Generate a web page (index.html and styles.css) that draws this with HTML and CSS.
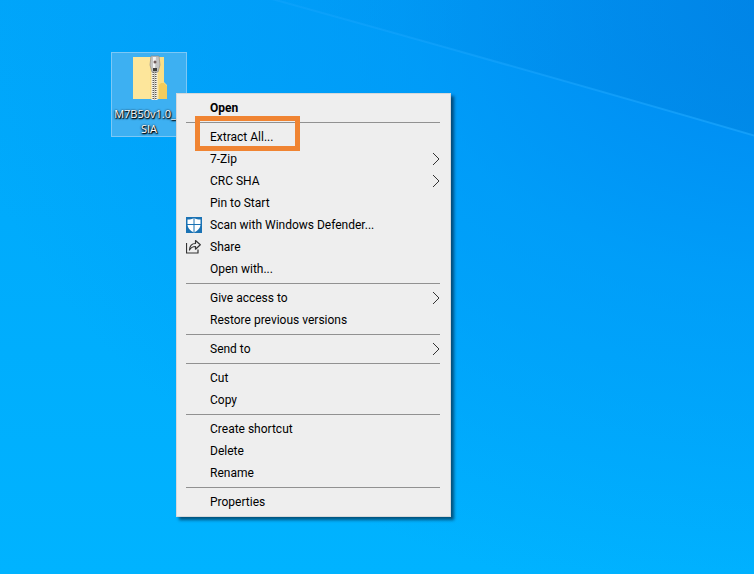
FILE: index.html
```html
<!DOCTYPE html>
<html lang="en">
<head>
<meta charset="utf-8">
<title>Desktop</title>
<link rel="stylesheet" href="styles.css">
</head>
<body>
<main class="desktop">
  <svg class="beam" viewBox="0 0 754 574" preserveAspectRatio="none" aria-hidden="true">
    <defs>
      <linearGradient id="glow" x1="0" y1="0" x2="1" y2="0">
        <stop offset="0" stop-color="#1ea8ff" stop-opacity=".3"/>
        <stop offset="1" stop-color="#1ea8ff" stop-opacity=".65"/>
      </linearGradient>
      <linearGradient id="shade" x1="0" y1="0" x2="1" y2="0">
        <stop offset="0" stop-color="#0080d8" stop-opacity="0"/>
        <stop offset="1" stop-color="#0080d8" stop-opacity=".4"/>
      </linearGradient>
    </defs>
    <path d="M272 -1 Q500 62 756 136 V-1Z" fill="url(#shade)"/>
    <path d="M272 -1 Q500 62 756 136" fill="none" stroke="url(#glow)" stroke-width="2"/>
  </svg>

  <button class="file" type="button">
    <svg class="file-icon" viewBox="0 0 36 46" aria-hidden="true">
      <path d="M2 2h31v25l3 3v14H2z" fill="#fbdf86"/>
      <path d="M2 2h17v42H2z" fill="#fde69b"/>
      <path d="M28 44V30l2-2h3l3 3v13z" fill="#f3cc5c"/>
      <path d="M23.500 14v31" stroke="#f4f1e6" stroke-width="6"/>
      <path d="M23.500 15v30" stroke="#615d55" stroke-width="4" stroke-dasharray="1 1"/>
      <path d="M23.500 15v30" stroke="#c9c6bd" stroke-width="1"/>
      <path d="M20 1h8l1 9-2 7h-6l-2-7z" fill="#c4c4c4" stroke="#858585" stroke-width=".6"/>
      <path d="M22 2h3l-1 11h-2z" fill="#f2f2f2"/>
      <circle cx="24" cy="7" r="1.500" fill="#715d5d"/>
      <path d="M22 13h4v3h-4z" fill="#3d3d3d"/>
    </svg>
    <span class="file-name"><span class="file-stem">M7B50v1.0_</span><br>SIA</span>
  </button>

  <div class="menu" role="menu">
    <button class="item default" role="menuitem">Open</button>
    <hr>
    <button class="item marked" role="menuitem">Extract All...</button>
    <button class="item" role="menuitem">7-Zip<svg class="arrow" viewBox="0 0 8 14" aria-hidden="true"><path d="M1 1l6 6-6 6"/></svg></button>
    <button class="item" role="menuitem">CRC SHA<svg class="arrow" viewBox="0 0 8 14" aria-hidden="true"><path d="M1 1l6 6-6 6"/></svg></button>
    <button class="item" role="menuitem">Pin to Start</button>
    <button class="item" role="menuitem"><svg class="icon" viewBox="0 0 16 16" aria-hidden="true"><path d="M0 0h16v16H0z" fill="#1a72b4"/><path d="M8 1c2 1.300 4 1.500 6.500 1.500V7c0 4-2.500 6.500-6.500 8.500C4 13.500 1.500 11 1.500 7V2.500C4 2.500 6 2.300 8 1z" fill="#fff"/><path d="M8 1v14M1 7.500h14" stroke="#1a72b4"/></svg>Scan with Windows Defender...</button>
    <button class="item" role="menuitem"><svg class="icon" viewBox="0 0 16 16" aria-hidden="true"><path d="M.500 4v10h11.500v-3.500M3.500 11c.3-4.500 2.500-6.500 6-6.500V1.500l4.800 4.300-4.800 4.400V7.500c-2.700 0-4.500.8-6 3.500z" fill="none" stroke="#333" stroke-width="1.200" stroke-linejoin="round"/></svg>Share</button>
    <button class="item" role="menuitem">Open with...</button>
    <hr>
    <button class="item" role="menuitem">Give access to<svg class="arrow" viewBox="0 0 8 14" aria-hidden="true"><path d="M1 1l6 6-6 6"/></svg></button>
    <button class="item" role="menuitem">Restore previous versions</button>
    <hr>
    <button class="item" role="menuitem">Send to<svg class="arrow" viewBox="0 0 8 14" aria-hidden="true"><path d="M1 1l6 6-6 6"/></svg></button>
    <hr>
    <button class="item" role="menuitem">Cut</button>
    <button class="item" role="menuitem">Copy</button>
    <hr>
    <button class="item" role="menuitem">Create shortcut</button>
    <button class="item" role="menuitem">Delete</button>
    <button class="item" role="menuitem">Rename</button>
    <hr>
    <button class="item" role="menuitem">Properties</button>
  </div>
</main>
</body>
</html>
```

FILE: styles.css
```css
*, *::after { box-sizing: border-box; }

body {
  margin: 0;
  font: 12px/16px Roboto, "Noto Sans", sans-serif;
}

.desktop {
  position: relative;
  min-height: 100vh;
  overflow: hidden;
  background:
    radial-gradient(ellipse at 105% 0%, #0086f0 0%, rgba(0, 148, 246, .6) 35%, rgba(0, 168, 250, 0) 75%),
    linear-gradient(to bottom, #00a6fa, #00b3ff);
}

.beam {
  position: absolute;
  inset: 0;
  width: 100%;
  height: 100%;
}

/* Desktop items sit freely on the canvas */
.file {
  position: absolute;
  left: 111px;
  top: 52px;
  display: flex;
  flex-direction: column;
  align-items: center;
  width: 76px;
  padding: 2px 0 0;
  border: 1px solid #7cc8f6;
  background: #3db0f2;
  color: #fff;
  font: inherit;
}

.file-icon {
  width: 36px;
  height: 46px;
}

.file-name {
  margin-top: 5px;
  font: 11px/15px "Open Sans", "Noto Sans", sans-serif;
  text-shadow: 1px 1px 1px #000, 0 1px 2px #000, 0 0 2px #234;
}

.file-stem { padding-right: 8px; }

.menu {
  position: absolute;
  left: 176px;
  top: 93px;
  width: 275px;
  padding: 3px 0;
  border: 1px solid #d5d8da;
  background: #eee;
  box-shadow: 3px 3px 3px rgba(0, 20, 40, .6);
}

.menu hr {
  height: 1px;
  margin: 3px 10px 3px 9px;
  border: 0;
  background: #919191;
}

.item {
  position: relative;
  display: flex;
  align-items: center;
  width: 100%;
  height: 22px;
  padding: 0 10px 0 33px;
  border: 0;
  background: none;
  color: #000;
  font: inherit;
  text-align: left;
}

.item.default { font-weight: 700; }

.icon {
  width: 16px;
  height: 16px;
  margin: 0 8px 0 -24px;
}

.arrow {
  width: 8px;
  height: 14px;
  margin-left: auto;
  fill: none;
  stroke: #333;
}

/* Annotation frame around the highlighted command */
.marked::after {
  content: "";
  position: absolute;
  left: 18px;
  top: -10px;
  width: 105px;
  height: 35px;
  border: 5px solid #f08432;
}
```
